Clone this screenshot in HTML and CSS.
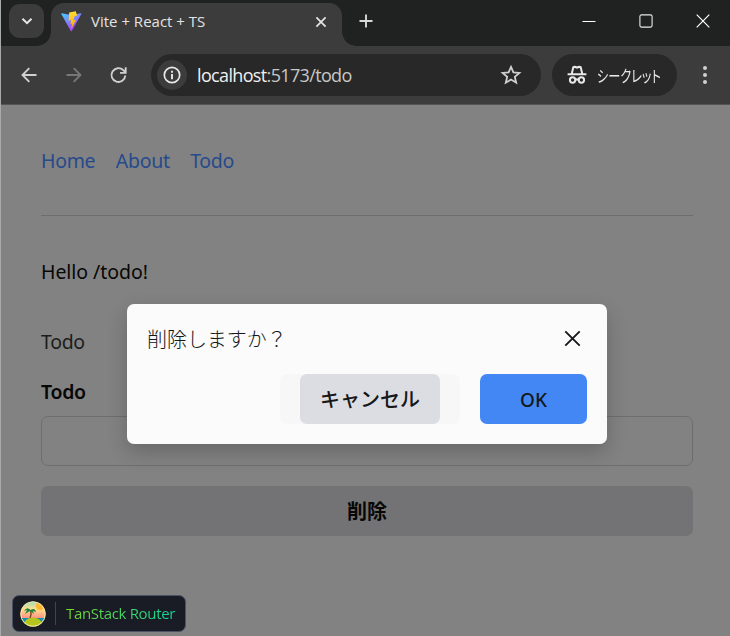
FILE: index.html
```html
<!DOCTYPE html>
<html lang="ja">
<head>
<meta charset="utf-8">
<title>Vite + React + TS</title>
<link rel="stylesheet" href="styles.css">
</head>
<body>
<div class="window">
  <header class="tabstrip">
    <div class="tab-search"><svg width="14" height="14" viewBox="0 0 14 14"><path d="M2.500 4.700 7 9.200l4.500-4.500" fill="none" stroke="#e6e6e6" stroke-width="2"/></svg></div>
    <div class="tab">
      <svg class="vite" width="21" height="21" viewBox="0 0 21 21">
        <defs>
          <linearGradient id="v" x1="0" y1="0" x2=".6" y2="1"><stop offset="0" stop-color="#41d1ff"/><stop offset="1" stop-color="#bd34fe"/></linearGradient>
          <linearGradient id="b" x1="0" y1="0" x2="0" y2="1"><stop offset="0" stop-color="#ffdd35"/><stop offset="1" stop-color="#ffa800"/></linearGradient>
        </defs>
        <path d="M.6 2.300 10 4l9.800-1.700q.9 0 .5.800L10.800 20q-.5.800-1 0L.3 3.100q-.3-.8.300-.8Z" fill="url(#v)"/>
        <path d="m14.800.3-6.600 1.300-.6 8.100 2.600-.6-.8 3.900 1.800-.5-.9 5.200 4.700-8.900-2.600.5 1.200-4 2.500-.5Z" fill="url(#b)"/>
      </svg>
      <span class="tab-title">Vite + React + TS</span>
      <svg class="tab-close" width="12" height="12" viewBox="0 0 12 12"><path d="m1.400 1.400 9.200 9.200m0-9.200-9.200 9.200" stroke="#e6e6e6" stroke-width="1.700"/></svg>
    </div>
    <svg class="new-tab" width="14" height="14" viewBox="0 0 14 14"><path d="M7 .5v13M.5 7h13" stroke="#d8d8d8" stroke-width="1.900"/></svg>
    <div class="controls">
      <svg width="14" height="14" viewBox="0 0 14 14"><path d="M.5 7.500h13" stroke="#fff"/></svg>
      <svg width="14" height="14" viewBox="0 0 14 14"><rect x=".9" y=".9" width="12.200" height="12.200" rx="1.500" fill="none" stroke="#e8e8e8" stroke-width="1.100"/></svg>
      <svg width="14" height="14" viewBox="0 0 14 14"><path d="m.7.7 12.600 12.600m0-12.600L.7 13.300" stroke="#fff" stroke-width="1.200"/></svg>
    </div>
  </header>
  <div class="toolbar">
    <svg class="nav" width="20" height="20" viewBox="0 0 20 20"><path d="M17.500 10H3.500m6.800-6.800L3.500 10l6.800 6.800" fill="none" stroke="#d0d0d0" stroke-width="1.900"/></svg>
    <svg class="nav" width="20" height="20" viewBox="0 0 20 20"><path d="M2.500 10h14M9.700 3.200l6.800 6.800-6.800 6.800" fill="none" stroke="#777" stroke-width="1.900"/></svg>
    <svg class="nav" width="20" height="20" viewBox="0 0 20 20"><path d="M16.300 10.500a6.900 6.900 0 1 1-2-5.300l2.200 2.200M16.700 2.200v5.700h-5.700" fill="none" stroke="#d0d0d0" stroke-width="1.900"/></svg>
    <div class="omnibox">
      <span class="info"><svg width="18" height="18" viewBox="0 0 18 18"><circle cx="9" cy="9" r="7.700" fill="none" stroke="#e8e8e8" stroke-width="1.700"/><path d="M9 8v5.200M9 4.800v1.900" stroke="#e8e8e8" stroke-width="1.900"/></svg></span>
      <span class="url"><b>localhost</b>:5173/todo</span>
      <svg class="star" width="22" height="22" viewBox="0 0 22 22"><path d="m11 2.900 2.400 5.500 6 .5-4.600 4 1.400 5.800-5.200-3.100-5.200 3.100 1.400-5.800-4.600-4 6-.5Z" fill="none" stroke="#d0d0d0" stroke-width="1.800"/></svg>
    </div>
    <div class="incognito">
      <svg width="20" height="20" viewBox="0 0 20 20"><g fill="none" stroke="#e8e8e8" stroke-width="2"><path d="M.6 9.200h18.800M4.700 9 6.300 2.200Q8 1.400 10 2.600q2-1.200 3.700-.4L15.300 9M8.500 15q1.500-1.400 3 0"/><circle cx="5.600" cy="15" r="2.700"/><circle cx="14.400" cy="15" r="2.700"/></g></svg>
      <span class="incognito-label">シークレット</span>
    </div>
    <svg class="menu" width="6" height="20" viewBox="0 0 6 20"><g fill="#d0d0d0"><circle cx="3" cy="3" r="2"/><circle cx="3" cy="10" r="2"/><circle cx="3" cy="17" r="2"/></g></svg>
  </div>
  <main class="page">
    <nav class="links"><a class="home">Home</a><a class="about">About</a><a class="todo">Todo</a></nav>
    <hr class="rule">
    <p class="hello">Hello /todo!</p>
    <p class="heading">Todo</p>
    <label class="label">Todo</label>
    <div class="input"></div>
    <div class="delete"><span>削除</span></div>
  </main>
  <section class="dialog">
    <div class="dialog-head">
      <span class="dialog-title">削除しますか？</span>
      <svg width="17" height="17" viewBox="0 0 17 17"><path d="m1.300 1.300 14.400 14.400m0-14.400L1.300 15.700" stroke="#16181b" stroke-width="1.900"/></svg>
    </div>
    <div class="actions">
      <div class="cancel-wrap"><div class="cancel">キャンセル</div></div>
      <div class="ok">OK</div>
    </div>
  </section>
  <div class="devtools">
    <svg width="26" height="26" viewBox="0 0 26 26">
      <defs><clipPath id="c"><circle cx="13" cy="13" r="12.600"/></clipPath><linearGradient id="s" x1="0" y1="0" x2="0" y2="1"><stop offset="0" stop-color="#8edbbf"/><stop offset=".3" stop-color="#ffe08c"/><stop offset=".65" stop-color="#ff9585"/></linearGradient></defs>
      <g clip-path="url(#c)"><path d="M0 0h26v26H0z" fill="url(#s)"/><circle cx="20" cy="5" r="4" fill="#ffb62c"/><path d="M0 17h26v9H0z" fill="#158fae"/><ellipse cx="13" cy="23" rx="9" ry="6.500" fill="#b5c51b"/><path d="M10 17q2-4 .5-8" fill="none" stroke="#754322" stroke-width="1.400"/><path d="M10.500 9Q7 5 4 10l3-1-2 4 5-3 4 3-1-3 3 1q-1-5-5.500-2Z" fill="#25853e"/></g>
      <circle cx="13" cy="13" r="12.200" fill="none" stroke="#f4e6a0" stroke-width="1"/>
    </svg>
    <span class="brand">TanStack Router</span>
  </div>
</div>
</body>
</html>
```
FILE: styles.css
```css
* { box-sizing: border-box; }
body { margin: 0; overflow: hidden; background: #202221; }
p { margin: 0; }
svg { display: block; flex: none; }
.window { position: relative; width: 730px; height: 636px; border-left: 1px solid #a9aaac; background: #828282; font-family: "Noto Sans", "Noto Sans CJK JP", sans-serif; color: #070707; }
.tabstrip { display: flex; align-items: flex-start; height: 46px; background: #202221; }
.tab-search { display: grid; place-items: center; width: 35px; height: 34px; margin: 4px 0 0 8px; border-radius: 11px; background: #3c3c3c; }
.tab { position: relative; display: flex; align-items: center; width: 291px; height: 43px; margin: 3px 0 0 7px; padding: 0 15px 6px 10px; border-radius: 13px 13px 0 0; background: #3c3c3c; }
.tab::before, .tab::after { content: ""; position: absolute; bottom: 0; width: 14px; height: 14px; }
.tab::before { left: -14px; background: radial-gradient(circle at 0 0, transparent 13.500px, #3c3c3c 14px); }
.tab::after { right: -14px; background: radial-gradient(circle at 100% 0, transparent 13.500px, #3c3c3c 14px); }
.tab-title { margin: 0 0 2px 9px; font: 15px/20px "Open Sans", sans-serif; color: #e3e3e3; white-space: nowrap; }
.tab-close { margin-left: auto; }
.new-tab { margin: 14px 0 0 17px; }
.controls { display: flex; gap: 43px; margin: 14px 20px 0 auto; }
.toolbar { display: flex; align-items: center; height: 59px; padding: 0 22px 0 18px; border-bottom: 1px solid #555; background: #3c3c3c; }
.nav { margin-right: 25px; }
.omnibox { display: flex; align-items: center; width: 390px; height: 42px; margin-left: -3px; padding: 0 19px 0 6px; border-radius: 21px; background: #282828; }
.info { display: grid; place-items: center; width: 30px; height: 30px; border-radius: 50%; background: #3c3c3c; }
.url { margin-left: 10px; font: 18px/24px "Open Sans", sans-serif; letter-spacing: -.65px; color: #c7c7c7; white-space: nowrap; }
.url b { font-weight: 400; color: #f0f0f0; }
.star { margin-left: auto; }
.incognito { display: flex; align-items: center; width: 125px; height: 42px; margin-left: 11px; padding-left: 15px; border-radius: 21px; background: #282828; }
.incognito-label { width: 64px; margin-left: 10px; font: 16px/20px "Noto Sans CJK JP", sans-serif; font-feature-settings: "palt"; transform: scaleX(.76); transform-origin: 0 50%; color: #e8e8e8; white-space: nowrap; }
.menu { margin-left: auto; }
.page { display: flex; flex-direction: column; padding: 41px 37px 0 40px; font-size: 19.500px; line-height: 30px; }
.links { display: flex; gap: 20.500px; letter-spacing: -.3px; color: #264a8c; }
.rule { width: 100%; height: 1px; margin: 39px 0 0; border: 0; background: #6d6d6e; }
.hello { margin-top: 41px; letter-spacing: -.05px; }
.heading { margin-top: 40px; letter-spacing: -.3px; color: #1c1c1c; }
.label { margin-top: 20px; font-weight: 600; letter-spacing: -.3px; }
.input { height: 50px; margin-top: 9px; border: 1px solid #6e6e6f; border-radius: 7px; }
.delete { display: grid; place-items: center; height: 50px; margin-top: 20px; padding-top: 2px; border-radius: 7px; background: #737375; font-size: 20px; font-weight: 700; }
.dialog { position: absolute; left: 126px; top: 304px; width: 480px; height: 140px; padding: 20px; border-radius: 7px; background: #fbfbfb; box-shadow: 0 8px 20px rgba(0,0,0,.2); color: #151719; }
.dialog-head { display: flex; align-items: center; justify-content: space-between; height: 30px; padding-right: 6px; }
.dialog-head svg { margin-bottom: 2px; }
.dialog-title { font: 300 20px/30px "Noto Sans CJK JP", sans-serif; letter-spacing: -.05px; }
.actions { display: flex; justify-content: flex-end; gap: 20px; margin-top: 20px; }
.cancel-wrap { width: 180px; padding: 0 20px; border-radius: 7px; background: #f7f7f7; }
.cancel, .ok { display: grid; place-items: center; height: 50px; border-radius: 7px; font-size: 20px; }
.cancel { padding-bottom: 2px; background: #dcdde2; font-weight: 500; }
.ok { width: 107px; padding-top: 1px; background: #4387f4; font-size: 19px; font-weight: 500; }
.devtools { position: absolute; left: 11px; top: 595px; display: flex; align-items: center; width: 174px; height: 37px; padding-left: 7px; border: 1px solid #4b5266; border-radius: 7px; background: #191c24; }
.brand { margin-left: 9px; padding-left: 10px; border-left: 1px solid #414552; font: 15px/23px "Open Sans", sans-serif; letter-spacing: -.33px; color: transparent; background: linear-gradient(90deg, #84d625, #12d79b); background-clip: text; white-space: nowrap; }
```
